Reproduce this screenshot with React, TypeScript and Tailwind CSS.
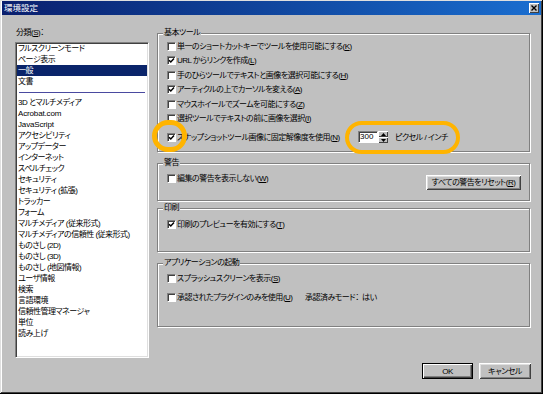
import React from 'react';

const topItems = ['フルスクリーンモード', 'ページ表示', '一般', '文書'];
const moreItems = [
  '3D とマルチメディア',
  'Acrobat.com',
  'JavaScript',
  'アクセシビリティ',
  'アップデーター',
  'インターネット',
  'スペルチェック',
  'セキュリティ',
  'セキュリティ (拡張)',
  'トラッカー',
  'フォーム',
  'マルチメディア (従来形式)',
  'マルチメディアの信頼性 (従来形式)',
  'ものさし (2D)',
  'ものさし (3D)',
  'ものさし (地図情報)',
  'ユーザ情報',
  '検索',
  '言語環境',
  '信頼性管理マネージャ',
  '単位',
  '読み上げ',
];

// latin-only names look too tight with the kana tracking
const latinItems = ['Acrobat.com', 'JavaScript'];

const basicTools = [
  { text: '単一のショートカットキーでツールを使用可能にする', key: 'K', checked: false },
  { text: 'URL からリンクを作成', key: 'L', checked: true },
  { text: '手のひらツールでテキストと画像を選択可能にする', key: 'H', checked: false },
  { text: 'アーティクルの上でカーソルを変える', key: 'A', checked: true },
  { text: 'マウスホイールでズームを可能にする', key: 'Z', checked: false },
  { text: '選択ツールでテキストの前に画像を選択', key: 'I', checked: false },
];

const Accel = ({ text, k }: { text: string; k: string }) => (
  <>
    {text}(<u>{k}</u>)
  </>
);

const CheckBox = ({ checked }: { checked?: boolean }) => (
  <span className="w-[9px] h-[9px] shrink-0 flex items-center justify-center bg-white border border-t-[#808080] border-l-[#808080] border-r-white border-b-white shadow-[inset_1px_1px_0_#404040]">
    {checked && (
      <svg width="7" height="7" viewBox="0 0 7 7">
        <path d="M1 3.2 L2.8 5 L6 1.6" fill="none" stroke="#000" strokeWidth="1.5" />
      </svg>
    )}
  </span>
);

const Row = ({ checked, children }: { checked?: boolean; children: React.ReactNode }) => (
  <div className="h-[14.5px] flex items-center gap-[1px] whitespace-nowrap">
    <CheckBox checked={checked} />
    <span>{children}</span>
  </div>
);

const Group = ({ title, className, children }: { title: string; className: string; children: React.ReactNode }) => (
  <div className={`relative border border-[#808080] shadow-[1px_1px_0_#fff,inset_1px_1px_0_#fff] ${className}`}>
    <span className="absolute left-[5px] top-[-6px] h-[10px] leading-[10px] px-[1px] bg-[#c0c0c0] whitespace-nowrap">
      {title}
    </span>
    {children}
  </div>
);

const Button = ({ children, primary, className }: { children: React.ReactNode; primary?: boolean; className: string }) => (
  <div
    className={`flex items-center justify-center whitespace-nowrap bg-[#c0c0c0] ${
      primary
        ? 'border border-black shadow-[inset_1px_1px_0_#fff,inset_-1px_-1px_0_#404040,inset_-2px_-2px_0_#808080]'
        : 'shadow-[inset_1px_1px_0_#fff,inset_-1px_-1px_0_#404040,inset_2px_2px_0_#dfdfdf,inset_-2px_-2px_0_#808080]'
    } ${className}`}
  >
    {children}
  </div>
);

export default function App() {
  return (
    <div className="relative w-[543px] h-[394px] overflow-hidden bg-[#c0c0c0] px-[2px] pt-[1px] text-[8px] leading-[11px] tracking-[-0.5px] text-black font-['Liberation_Sans','Noto_Sans_CJK_JP',sans-serif] [font-feature-settings:'palt'] shadow-[inset_-1px_-1px_0_#000,inset_1px_1px_0_#dfdfdf,inset_-2px_-2px_0_#404040,inset_2px_2px_0_#fff]">
      {/* title bar */}
      <div className="h-[14px] flex items-center justify-between pl-[2px] pr-[2px] bg-gradient-to-r from-[#0a1f6e] to-[#1a6ed0]">
        <span className="text-white text-[8.5px] leading-[10px] tracking-normal">環境設定</span>
        <div className="w-[10px] h-[10px] flex items-center justify-center bg-[#c0c0c0] shadow-[inset_1px_1px_0_#fff,inset_-1px_-1px_0_#404040]">
          <svg width="6" height="6" viewBox="0 0 6 6">
            <path d="M0.5 0.5 L5.5 5.5 M5.5 0.5 L0.5 5.5" stroke="#000" strokeWidth="1.4" />
          </svg>
        </div>
      </div>

      <div className="flex pl-[13px]">
        {/* category list */}
        <div className="w-[134px] shrink-0">
          <div className="mt-[13px] h-[10px] leading-[10px] pl-[1px]">
            分類(<u>S</u>)：
          </div>
          <div className="mt-[4px] h-[316px] bg-white border border-t-[#808080] border-l-[#808080] border-r-white border-b-white shadow-[inset_1px_1px_0_#404040,inset_-1px_-1px_0_#dfdfdf] pl-[1px] pr-[1px]">
            {topItems.map((item) => (
              <div
                key={item}
                className={`h-[11px] pl-[1px] whitespace-nowrap ${item === '一般' ? 'bg-[#0a246a] text-white' : ''}`}
              >
                {item}
              </div>
            ))}
            <div className="h-[10px] flex items-center px-[2px]">
              <div className="h-px w-full bg-[#4a4aa0]" />
            </div>
            {moreItems.map((item) => (
              <div
                key={item}
                className={`h-[11px] pl-[1px] whitespace-nowrap ${latinItems.includes(item) ? 'tracking-[-0.15px]' : ''}`}
              >
                {item}
              </div>
            ))}
          </div>
        </div>

        {/* settings */}
        <div className="ml-[8px] w-[373px] pt-[18px]">
          <Group title="基本ツール" className="h-[119px] pt-[5px] pl-[9px]">
            {basicTools.map((t) => (
              <Row key={t.key} checked={t.checked}>
                <Accel text={t.text} k={t.key} />
              </Row>
            ))}
            <div className="mt-[4.5px] h-[13px] flex items-center">
              <div className="w-[191px] shrink-0 flex items-center gap-[1px] whitespace-nowrap">
                <CheckBox checked />
                <span>
                  <Accel text="スナップショットツール画像に固定解像度を使用" k="N" />
                </span>
              </div>
              <div className="w-[20px] h-[12px] bg-white border border-t-[#808080] border-l-[#808080] border-r-white border-b-white shadow-[inset_1px_1px_0_#404040] pl-[1px] leading-[10px] text-[8px] tracking-normal">
                300
              </div>
              <div className="w-[10px] h-[12px] flex flex-col">
                <div className="h-[6px] flex items-center justify-center shadow-[inset_1px_1px_0_#fff,inset_-1px_-1px_0_#404040]">
                  <svg width="5" height="3" viewBox="0 0 5 3">
                    <path d="M2.5 0 L5 3 L0 3 Z" fill="#000" />
                  </svg>
                </div>
                <div className="h-[6px] flex items-center justify-center shadow-[inset_1px_1px_0_#fff,inset_-1px_-1px_0_#404040]">
                  <svg width="5" height="3" viewBox="0 0 5 3">
                    <path d="M0 0 L5 0 L2.5 3 Z" fill="#000" />
                  </svg>
                </div>
              </div>
              <span className="ml-[7px] whitespace-nowrap">ピクセル / インチ</span>
            </div>
          </Group>

          <Group title="警告" className="mt-[11px] h-[38px] pl-[9px] pr-[8px] flex items-start justify-between">
            <div className="mt-[7.5px]">
              <Row>
                <Accel text="編集の警告を表示しない" k="W" />
              </Row>
            </div>
            <Button className="mt-[11px] w-[95px] h-[15px]">
              <Accel text="すべての警告をリセット" k="R" />
            </Button>
          </Group>

          <Group title="印刷" className="mt-[7px] h-[44px] pl-[9px] pt-[8.5px]">
            <Row checked>
              <Accel text="印刷のプレビューを有効にする" k="T" />
            </Row>
          </Group>

          <Group title="アプリケーションの起動" className="mt-[11px] h-[64px] pl-[9px] pt-[7.5px]">
            <Row>
              <Accel text="スプラッシュスクリーンを表示" k="S" />
            </Row>
            <div className="mt-[4px] flex items-center">
              <div className="w-[138px] shrink-0">
                <Row>
                  <Accel text="承認されたプラグインのみを使用" k="U" />
                </Row>
              </div>
              <span className="whitespace-nowrap">承認済みモード：&nbsp;&nbsp;はい</span>
            </div>
          </Group>

          <div className="mt-[36px] flex justify-end gap-[6px] mr-[-1px]">
            <Button primary className="w-[51px] h-[16px]">
              OK
            </Button>
            <Button className="w-[52px] h-[16px]">キャンセル</Button>
          </div>
        </div>
      </div>

      {/* highlight marks drawn over the screenshot */}
      <svg className="absolute left-[344px] top-[132px]" width="6" height="12" viewBox="0 0 6 12">
        <path d="M5 1 Q1 6 5 11" fill="none" stroke="#e8262b" strokeWidth="1.6" />
      </svg>
      <div className="absolute left-[152px] top-[120px] w-[35px] h-[32px] rounded-full border-[5px] border-[#ffb400]" />
      <div className="absolute left-[345px] top-[121px] w-[115px] h-[33px] rounded-full border-[4px] border-[#ffb400]" />
    </div>
  );
}
